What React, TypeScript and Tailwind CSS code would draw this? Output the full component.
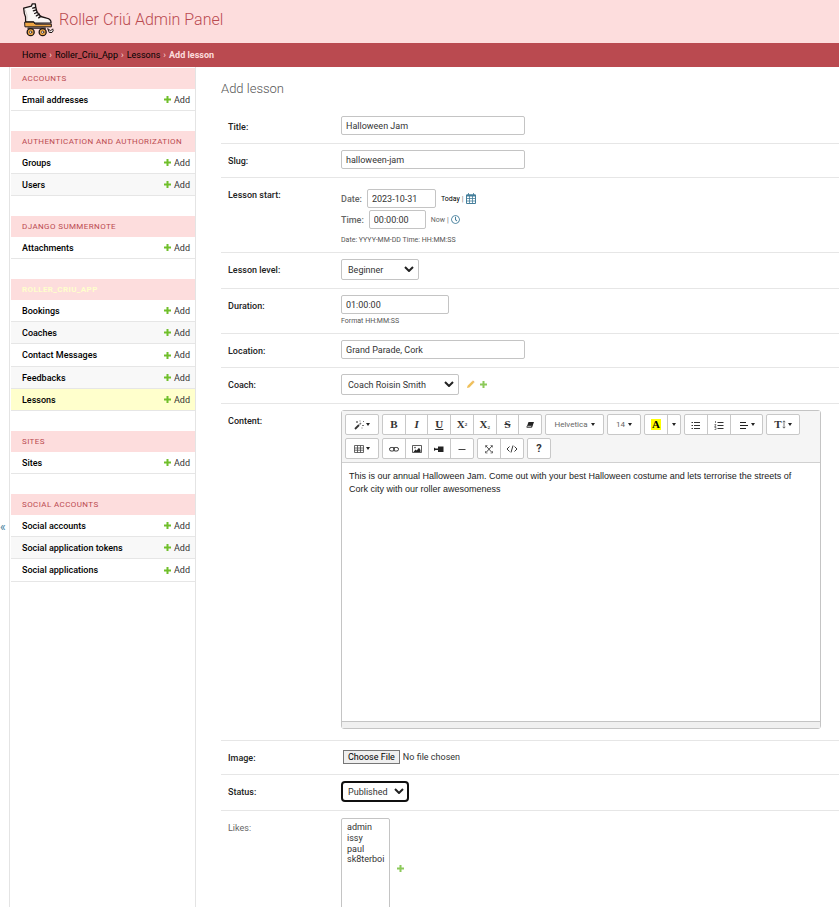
import React from "react";
import { FaRegClock } from "react-icons/fa";

type Module = { name: string; current?: boolean; items: string[] };

const modules: Module[] = [
  { name: "Accounts", items: ["Email addresses"] },
  { name: "Authentication and Authorization", items: ["Groups", "Users"] },
  { name: "Django Summernote", items: ["Attachments"] },
  { name: "Roller_Criu_App", current: true, items: ["Bookings", "Coaches", "Contact Messages", "Feedbacks", "Lessons"] },
  { name: "Sites", items: ["Sites"] },
  { name: "Social Accounts", items: ["Social accounts", "Social application tokens", "Social applications"] },
];

function Plus({ className = "text-[#70bf2b]" }: { className?: string }) {
  return (
    <svg viewBox="0 0 7 7" className={`size-[7px] shrink-0 ${className}`} fill="currentColor" aria-hidden="true">
      <path d="M2.500 0h2v2.500H7v2H4.500V7h-2V4.500H0v-2h2.500z" />
    </svg>
  );
}

function Pencil() {
  return (
    <svg viewBox="0 0 9 9" className="size-[9px] shrink-0" aria-hidden="true">
      <path d="M1 8l.6-2.300L6.300 1 8 2.700 3.300 7.400z" fill="#efc05a" />
      <path d="M6.300 1L7 .4 8.600 2 8 2.700z" fill="#e8a95c" />
    </svg>
  );
}

function Calendar() {
  return (
    <svg viewBox="0 0 10 11" className="h-[11px] w-2.5" aria-hidden="true" fill="none" stroke="#447e9b">
      <path d="M.5 2h9v8.500h-9z" />
      <path d="M.5 2.500h9" strokeWidth="2" />
      <path d="M2.500 0v2M7.500 0v2M.5 5.500h9M.5 8h9M3.500 3v7.500M6.500 3v7.500" strokeWidth=".8" />
    </svg>
  );
}

function Logo() {
  return (
    <svg viewBox="66 6 96 104" className="h-[35px] w-8 shrink-0" aria-hidden="true" strokeLinejoin="round" strokeLinecap="round">
      <path d="M71 24 L94 18 L97 11 L106 11 L107 20 L111 36 L122 49 L140 54 Q154 57 153 68 L104 69 L100 65 L77 65 Q79 50 73 40 Z" fill="#faf6f4" stroke="#1c1414" strokeWidth="4" />
      <path d="M76 30 Q84 44 81 60" fill="none" stroke="#d5cdca" strokeWidth="3" />
      <path d="M75 66 L100 66 L106 72 L154 72 L154 80 L76 80 Z" fill="#eda443" stroke="#1c1414" strokeWidth="3" />
      <path d="M98 24 L106 22 M100 32 L109 29 M104 40 L113 36 M109 47 L118 42 M116 53 L123 48" stroke="#1c1414" strokeWidth="4" />
      <path d="M84 84 H136" fill="none" stroke="#1c1414" strokeWidth="4" />
      <path d="M144 86 L152 92 L158 86 Q162 92 156 97 L149 97 Z" fill="#faf6f4" stroke="#1c1414" strokeWidth="3" />
      <circle cx="92" cy="96" r="10.500" fill="#eda443" stroke="#1c1414" strokeWidth="4" />
      <circle cx="128" cy="96" r="10.500" fill="#eda443" stroke="#1c1414" strokeWidth="4" />
      <circle cx="92" cy="96" r="3.500" fill="#fff" stroke="#1c1414" strokeWidth="2" />
      <circle cx="128" cy="96" r="3.500" fill="#fff" stroke="#1c1414" strokeWidth="2" />
    </svg>
  );
}

function Sidebar() {
  return (
    <nav aria-label="Applications" className="flex w-[187px] shrink-0 flex-col gap-5 border-x border-[#e4e4e4] pt-px pl-px">
      {modules.map((m) => (
        <table key={m.name} className="w-full border-separate border-spacing-0">
          <caption className={`h-[21px] bg-[#fddddd] px-[11px] text-left text-[8px] leading-[21px] tracking-wider whitespace-nowrap uppercase ${m.current ? "font-bold text-[#ffffcc]" : "text-[#ba4a50]"}`}>
            <a href="#">{m.name}</a>
          </caption>
          <tbody>
            {m.items.map((item, i) => (
              <tr key={item} className={`${i === 2 ? "h-[23px]" : "h-[22px]"} ${item === "Lessons" ? "bg-[#ffffcc]" : i % 2 ? "bg-[#f8f8f8]" : ""}`}>
                <th scope="row" className="border-b border-[#e6e6e6] p-0 pl-[11px] text-left font-medium text-black">
                  <a href="#">{item}</a>
                </th>
                <td className="border-b border-[#e6e6e6] p-0 pr-[5px]">
                  <a href="#" className="flex items-center justify-end gap-[3px] text-[#333]">
                    <Plus />
                    Add
                  </a>
                </td>
              </tr>
            ))}
          </tbody>
        </table>
      ))}
    </nav>
  );
}

function Row({ label, htmlFor, children, optional = false }: { label: string; htmlFor?: string; children: React.ReactNode; optional?: boolean }) {
  return (
    <div className="flex border-b border-[#e6e6e6] pt-1.5 pb-2 pl-[7px]">
      <label htmlFor={htmlFor} className={`w-[113px] shrink-0 pt-1 leading-[14px] ${optional ? "text-[#666]" : "font-medium text-[#222]"}`}>
        {label}
      </label>
      <div className="min-w-0 flex-1">{children}</div>
    </div>
  );
}

const field = "block h-[19px] rounded-[2px] border border-[#c4c4c4] bg-white px-1 text-[#333]";

function Select({ id, value, className, focused = false }: { id: string; value: string; className: string; focused?: boolean }) {
  return (
    <div className={`relative ${className}`}>
      <select
        id={id}
        defaultValue={value}
        className={`block h-[21px] w-full appearance-none bg-white text-[#333] ${focused ? "rounded-[4px] border-2 border-[#101010] pl-[5px]" : "rounded-[2px] border border-[#c4c4c4] pl-1.5"}`}
      >
        <option>{value}</option>
      </select>
      <svg viewBox="0 0 10 6" className="pointer-events-none absolute top-[7px] right-[5px] h-1.5 w-2.5" fill="none" stroke="#222" strokeWidth="2" aria-hidden="true">
        <path d="M1 1l4 4 4-4" />
      </svg>
    </div>
  );
}

function Caret() {
  return (
    <svg viewBox="0 0 4 3" className="h-[3px] w-1 shrink-0" fill="#222" aria-hidden="true">
      <path d="M0 0h4L2 3z" />
    </svg>
  );
}

function Icon({ children }: { children: React.ReactNode }) {
  return (
    <svg viewBox="0 0 10 10" className="size-2.5 shrink-0" fill="none" stroke="#333" aria-hidden="true">
      {children}
    </svg>
  );
}

function Tools({ className, children }: { className: string; children: React.ReactNode }) {
  return <div className={`flex h-[21px] divide-x divide-[#c8c8c8] rounded-[2px] border border-[#c8c8c8] bg-white ${className}`}>{children}</div>;
}

function Tool({ label, children, className = "flex-1" }: { label: string; children: React.ReactNode; className?: string }) {
  return (
    <button type="button" aria-label={label} className={`flex items-center justify-center gap-0.5 text-[#333] ${className}`}>
      {children}
    </button>
  );
}

const serif = "font-['Liberation_Serif',serif] text-[11px] leading-none font-bold";

function Editor() {
  return (
    <div className="mb-[3px] w-[480px] rounded-[3px] border border-[#c4c4c4]">
      <div className="flex flex-wrap gap-[3px] border-b border-[#d0d0d0] bg-[#f5f5f5] p-[3px]">
        <Tools className="w-[34px]">
          <Tool label="Style">
            <Icon>
              <path d="M1 9l4-4" strokeWidth="1.800" />
              <path d="M5.500 4.500L7 3" strokeWidth="1.500" stroke="#777" />
              <path d="M2 2h2M3 1v2M8 5.500h2M7.500 8h1M6 .5v1M9 1.500h1" strokeWidth=".8" stroke="#555" />
            </Icon>
            <Caret />
          </Tool>
        </Tools>
        <Tools className="w-40">
          <Tool label="Bold"><span className={serif}>B</span></Tool>
          <Tool label="Italic"><span className={`${serif} italic`}>I</span></Tool>
          <Tool label="Underline"><span className={`${serif} underline`}>U</span></Tool>
          <Tool label="Superscript"><span className={serif}>X<sup className="text-[5px]">2</sup></span></Tool>
          <Tool label="Subscript"><span className={serif}>X<sub className="text-[5px]">2</sub></span></Tool>
          <Tool label="Strikethrough"><span className={`${serif} line-through`}>S</span></Tool>
          <Tool label="Remove font style">
            <Icon>
              <path d="M3.500 2h5.500L7 7.500H1.500z" fill="#222" stroke="none" />
              <path d="M2.300 5.800h4.500l-.5 1.300H1.900z" fill="#fff" stroke="#222" strokeWidth=".6" />
            </Icon>
          </Tool>
        </Tools>
        <Tools className="w-[59px]"><Tool label="Font family"><span className="mr-px text-[8px] text-[#666]">Helvetica</span><Caret /></Tool></Tools>
        <Tools className="w-[34px]"><Tool label="Font size"><span className="mr-px text-[8px] text-[#666]">14</span><Caret /></Tool></Tools>
        <Tools className="w-[37px]">
          <Tool label="Recent color"><span className={`${serif} bg-[#ffff00] px-px text-black`}>A</span></Tool>
          <Tool label="More color" className="w-3"><Caret /></Tool>
        </Tools>
        <Tools className="w-[79px]">
          <Tool label="Unordered list" className="w-[23px]">
            <Icon>
              <path d="M3 2.500h6M3 5.500h6M3 8.500h6" />
              <path d="M.5 2.500h1.500M.5 5.500h1.500M.5 8.500h1.500" />
            </Icon>
          </Tool>
          <Tool label="Ordered list" className="w-[23px]">
            <Icon>
              <path d="M3.500 2.500h6M3.500 5.500h6M3.500 8.500h6" />
              <path d="M1.500 1v2M.5 4.500h1.500L.7 6.500h1.500M.5 7.500h1.500v2H.5" strokeWidth=".6" />
            </Icon>
          </Tool>
          <Tool label="Paragraph">
            <Icon>
              <path d="M1 2.500h6M1 5.500h8M1 8.500h6" stroke="#222" />
            </Icon>
            <Caret />
          </Tool>
        </Tools>
        <Tools className="w-[34px]">
          <Tool label="Line height">
            <span className="flex items-center">
              <span className={serif}>T</span>
              <svg viewBox="0 0 4 9" className="h-[9px] w-1" fill="none" stroke="#555" strokeWidth=".8" aria-hidden="true"><path d="M2 1v7M.7 2.200L2 .8l1.300 1.400M.7 6.800L2 8.200l1.300-1.400" /></svg>
            </span>
            <Caret />
          </Tool>
        </Tools>
        <Tools className="w-[34px]">
          <Tool label="Table">
            <Icon>
              <path d="M.5 1.500h9v7h-9zM.5 4h9M.5 6.200h9M3.500 1.500v7M6.500 1.500v7" strokeWidth=".8" stroke="#444" />
            </Icon>
            <Caret />
          </Tool>
        </Tools>
        <Tools className="w-[92px]">
          <Tool label="Link">
            <Icon>
              <rect x=".5" y="3.500" width="5" height="3.500" rx="1.700" />
              <rect x="4.500" y="3.500" width="5" height="3.500" rx="1.700" />
            </Icon>
          </Tool>
          <Tool label="Picture">
            <Icon>
              <path d="M.5 1.500h9v7h-9z" strokeWidth=".8" />
              <path d="M1.500 8l2-2.500 1.200 1L7 3.800 8.500 6v2z" fill="#222" stroke="none" />
              <circle cx="3" cy="3.600" r=".8" fill="#444" stroke="none" />
            </Icon>
          </Tool>
          <Tool label="Video">
            <Icon>
              <path d="M4 2.500h5.500v5.500H4zM0 3.500l1.500 1h2.500v1.500H1.500L0 7z" fill="#222" stroke="none" />
            </Icon>
          </Tool>
          <Tool label="Horizontal rule">
            <Icon>
              <path d="M1.500 5.500h7" stroke="#444" />
            </Icon>
          </Tool>
        </Tools>
        <Tools className="w-[47px]">
          <Tool label="Full screen">
            <Icon>
              <path d="M2 2l6 6.500M8 2L2 8.500" strokeWidth=".9" />
              <path d="M1.500 3.500v-2h2M6.500 1.500h2v2M8.500 7v2h-2M3.500 9h-2V7" strokeWidth=".6" />
            </Icon>
          </Tool>
          <Tool label="Code view">
            <svg viewBox="0 0 12 10" className="h-2.5 w-3" fill="none" stroke="#222" strokeWidth=".9" aria-hidden="true"><path d="M3.500 2.500L1 5l2.500 2.500M8.500 2.500L11 5 8.500 7.500M7 1.500L5 8.500" /></svg>
          </Tool>
        </Tools>
        <Tools className="w-6"><Tool label="Help"><span className="text-[11px] font-bold">?</span></Tool></Tools>
      </div>
      <textarea
        id="content"
        className="block h-[258px] w-full resize-none bg-white py-[7px] pr-6 pl-[7px] font-['Liberation_Sans',sans-serif] text-[9px] leading-[13px] text-[#222] outline-none"
        defaultValue="This is our annual Halloween Jam. Come out with your best Halloween costume and lets terrorise the streets of Cork city with our roller awesomeness"
      />
      <div className="h-[7px] border-t border-[#c4c4c4] bg-[#f0f0f0]" />
    </div>
  );
}

export default function App() {
  return (
    <div className="flex h-screen flex-col overflow-hidden bg-white font-[Roboto,sans-serif] text-[9px] leading-[12px] text-[#333]">
      <header className="flex h-[43px] shrink-0 items-center gap-[5px] bg-[#fddddd] pb-1 pl-[22px]">
        <Logo />
        <h1 className="text-[16px] leading-5 font-light text-[#ba4a50]"><a href="#">Roller Criú Admin Panel</a></h1>
      </header>
      <nav aria-label="Breadcrumbs" className="flex h-6 shrink-0 items-center gap-[3px] bg-[#ba4a50] pl-[22px] text-[#fddddd]">
        <a href="#" className="text-black">Home</a>›<a href="#" className="text-black">Roller_Criu_App</a>›<a href="#" className="text-black">Lessons</a>›<span className="font-bold">Add lesson</span>
      </nav>
      <div className="flex min-h-0 flex-1">
        <button type="button" aria-label="Toggle navigation" className="w-[9px] shrink-0 pt-20 text-left text-[12px] text-[#447e9b]">«</button>
        <Sidebar />
        <main className="min-w-0 flex-1 pt-[13px] pl-[25px]">
          <h2 className="mb-3 text-[13px] leading-[18px] font-light text-[#555]">Add lesson</h2>
          <form>
            <Row label="Title:" htmlFor="title"><input id="title" defaultValue="Halloween Jam" className={`${field} w-[184px]`} /></Row>
            <Row label="Slug:" htmlFor="slug"><input id="slug" defaultValue="halloween-jam" className={`${field} w-[184px]`} /></Row>
            <Row label="Lesson start:" htmlFor="date">
              <div className="flex flex-col gap-0.5 pt-[5px] text-[#666]">
                <div className="flex items-center gap-[5px]">
                  <label htmlFor="date" className="font-medium">Date:</label>
                  <input id="date" defaultValue="2023-10-31" className={`${field} w-[69px]`} />
                  <span className="flex items-center gap-0.5 text-[7px]"><a href="#" className="text-black">Today</a>|<a href="#" aria-label="Calendar"><Calendar /></a></span>
                </div>
                <div className="flex items-center gap-[5px]">
                  <label htmlFor="time" className="font-medium">Time:</label>
                  <input id="time" defaultValue="00:00:00" className={`${field} w-[57px]`} />
                  <span className="flex items-center gap-0.5 text-[7px]"><a href="#">Now</a>|<a href="#" aria-label="Clock"><FaRegClock size={9} color="#447e9b" /></a></span>
                </div>
              </div>
              <p className="mt-[7px] text-[7px] leading-[8px] text-[#555]">Date: YYYY-MM-DD Time: HH:MM:SS</p>
            </Row>
            <Row label="Lesson level:" htmlFor="level"><Select id="level" value="Beginner" className="w-[78px]" /></Row>
            <Row label="Duration:" htmlFor="duration">
              <input id="duration" defaultValue="01:00:00" className={`${field} w-[108px]`} />
              <p className="mt-[3px] text-[7px] leading-[8px] text-[#555]">Format HH:MM:SS</p>
            </Row>
            <Row label="Location:" htmlFor="location"><input id="location" defaultValue="Grand Parade, Cork" className={`${field} w-[184px]`} /></Row>
            <Row label="Coach:" htmlFor="coach">
              <div className="flex items-center">
                <Select id="coach" value="Coach Roisin Smith" className="w-[118px]" />
                <button type="button" aria-label="Change coach" className="ml-[7px]"><Pencil /></button>
                <button type="button" aria-label="Add coach" className="ml-[5px]"><Plus className="text-[#8cc95a]" /></button>
              </div>
            </Row>
            <Row label="Content:" htmlFor="content"><Editor /></Row>
            <Row label="Image:" htmlFor="image">
              <input id="image" type="file" className="ml-0.5 block h-[19px] pt-[3px] file:mr-[3px] file:h-[14px] file:border file:border-[#767676] file:bg-[#efefef] file:px-1 file:text-black" />
            </Row>
            <Row label="Status:" htmlFor="status"><Select id="status" value="Published" className="w-[68px]" focused /></Row>
            <Row label="Likes:" htmlFor="likes" optional>
              <div className="flex items-center pt-px">
                <select id="likes" multiple className="h-[100px] w-[49px] overflow-hidden rounded-[2px] border border-[#c4c4c4] px-[5px] py-[3px] leading-[11px]">
                  <option className="p-0">admin</option>
                  <option className="p-0">issy</option>
                  <option className="p-0">paul</option>
                  <option className="p-0">sk8terboi</option>
                </select>
                <button type="button" aria-label="Add like" className="ml-[7px]"><Plus className="text-[#8cc95a]" /></button>
              </div>
            </Row>
          </form>
        </main>
      </div>
    </div>
  );
}
